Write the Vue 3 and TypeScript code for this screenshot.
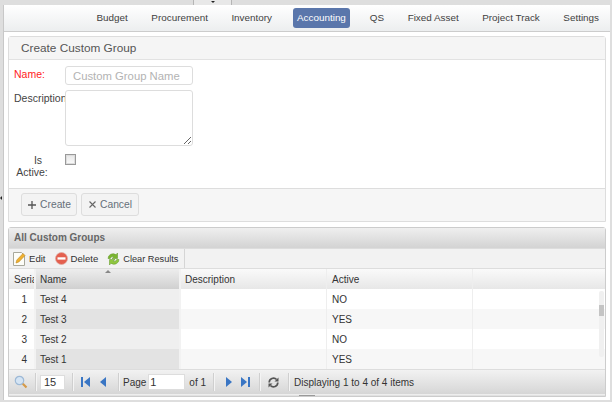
<script setup lang="ts">
const menu = ["Budget", "Procurement", "Inventory", "Accounting", "QS", "Fixed Asset", "Project Track", "Settings"];
const rows = [
  { no: 1, name: "Test 4", active: "NO" },
  { no: 2, name: "Test 3", active: "YES" },
  { no: 3, name: "Test 2", active: "NO" },
  { no: 4, name: "Test 1", active: "YES" },
];
</script>

<template>
  <div class="page">
    <div class="top-strip"><div class="top-tab"><span class="tab-arrow"></span></div></div>
    <div class="shell">
      <div class="gutter"><span class="gutter-arrow"></span></div>
      <div class="main">
        <nav class="nav">
          <a v-for="m in menu" :key="m" class="nav-item" :class="{ on: m === 'Accounting' }">{{ m }}</a>
        </nav>
        <section class="panel form-panel">
          <h2 class="panel-title">Create Custom Group</h2>
          <div class="form">
            <div class="field name-field">
              <label class="lbl req">Name:</label>
              <input class="txt" placeholder="Custom Group Name" />
            </div>
            <div class="field desc-field">
              <label class="lbl clip">Description:</label>
              <textarea class="area"></textarea>
            </div>
            <div class="field active-field">
              <label class="lbl center">Is Active:</label>
              <span class="chk"></span>
            </div>
          </div>
          <div class="actions">
            <button class="btn create">
              <svg width="10" height="10" viewBox="0 0 10 10"><path d="M5 1v8M1 5h8" stroke="#555" stroke-width="1.300" /></svg>
              Create
            </button>
            <button class="btn cancel">
              <svg width="9" height="9" viewBox="0 0 9 9"><path d="M1.500 1.500l6 6M7.500 1.500l-6 6" stroke="#666" stroke-width="1.100" /></svg>
              Cancel
            </button>
          </div>
        </section>
        <section class="panel grid-panel">
          <div class="grid-title">All Custom Groups</div>
          <div class="toolbar">
            <span class="tool t-edit">
              <svg width="13" height="15" viewBox="0 0 13 15"><path d="M.5 1.500h8l3 3v10H.5z" fill="#fdfdf8" stroke="#a8a89c" /><path d="M3 12l.8-3L10 2.500l2 2L5.800 11z" fill="#f0b030" stroke="#c08a20" stroke-width=".6" /></svg>
              Edit
            </span>
            <span class="tool t-del">
              <svg width="13" height="13" viewBox="0 0 13 13"><circle cx="6.500" cy="6.500" r="6" fill="#e4604f" stroke="#e0aaa2" stroke-width=".8" /><rect x="2.500" y="5.300" width="8" height="2.300" fill="#fff" /></svg>
              Delete
            </span>
            <span class="tool t-clear">
              <svg width="13" height="14" viewBox="0 0 13 14"><path d="M1 6.500a5 5 0 0 1 8-3.800L10.500 1v5.500H5L7 4.700A3 3 0 0 0 3.300 6.500z" fill="#7ab52f" stroke="#5c9420" stroke-width=".5" /><path d="M12 7.500a5 5 0 0 1-8 3.800L2.500 13V7.500H8L6 9.300a3 3 0 0 0 3.700-1.800z" fill="#8fc73f" stroke="#5c9420" stroke-width=".5" /></svg>
              Clear Results
            </span>
            <span class="tool-sep"></span>
          </div>
          <div class="table">
            <div class="row head">
              <div class="c serial">Serial</div>
              <div class="c name sorted">Name<span class="sort"></span></div>
              <div class="c desc">Description</div>
              <div class="c act">Active</div>
              <div class="c rest"></div>
            </div>
            <div v-for="r in rows" :key="r.no" class="row" :class="{ alt: r.no % 2 === 0 }">
              <div class="c serial num">{{ r.no }}</div>
              <div class="c name">{{ r.name }}</div>
              <div class="c desc"></div>
              <div class="c act">{{ r.active }}</div>
              <div class="c rest"></div>
            </div>
            <div class="vscroll"><span class="vthumb"></span></div>
          </div>
          <div class="pager">
            <svg class="p-find" width="14" height="14" viewBox="0 0 14 14"><circle cx="5.500" cy="5.500" r="4.200" fill="#d4e4f4" stroke="#9db9d6" stroke-width="1.200" /><path d="M8.800 8.800l3.700 3.700" stroke="#d49a4a" stroke-width="2.200" /></svg>
            <span class="sep s1"></span>
            <input class="size" value="15" />
            <span class="sep s2"></span>
            <svg class="p-first" width="9" height="10" viewBox="0 0 9 10"><rect width="2" height="10" fill="#3a76c4" /><path d="M9 0v10L3 5z" fill="#3a76c4" /></svg>
            <svg class="p-prev" width="6" height="10" viewBox="0 0 6 10"><path d="M6 0v10L0 5z" fill="#3a76c4" /></svg>
            <span class="sep s3"></span>
            <span class="p-txt p-page">Page</span>
            <input class="page-no" value="1" />
            <span class="p-txt">of 1</span>
            <span class="sep s4"></span>
            <svg class="p-next" width="6" height="10" viewBox="0 0 6 10"><path d="M0 0v10l6-5z" fill="#3a76c4" /></svg>
            <svg class="p-last" width="9" height="10" viewBox="0 0 9 10"><rect x="7" width="2" height="10" fill="#3a76c4" /><path d="M0 0v10l6-5z" fill="#3a76c4" /></svg>
            <span class="sep s5"></span>
            <svg class="p-refresh" width="11" height="11" viewBox="0 0 11 11"><path d="M1.200 5.500a4.300 4.300 0 0 1 7.400-3M9.800 5.500a4.300 4.300 0 0 1-7.400 3" fill="none" stroke="#555" stroke-width="1.700" /><path d="M10.500.500v4h-4zM.5 10.500v-4h4z" fill="#555" /></svg>
            <span class="sep s6"></span>
            <span class="p-txt">Displaying 1 to 4 of 4 items</span>
          </div>
          <div class="hscroll"><span class="handle"></span></div>
        </section>
      </div>
    </div>
  </div>
</template>

<style>
html,
body {
  margin: 0;
  background: #dedede;
}
</style>

<style scoped>
.page {
  width: 612px;
  height: 402px;
  overflow: hidden;
  font-family: "Liberation Sans", Arial, sans-serif;
  font-size: 11px;
  color: #333;
  display: flex;
  flex-direction: column;
}
.top-strip {
  height: 5px;
  background: #dedede;
  padding-left: 193px;
}
.top-tab {
  width: 39px;
  height: 5px;
  box-sizing: border-box;
  border-left: 1px solid #b5b5b5;
  border-right: 1px solid #b5b5b5;
  background: #e8e8e8;
  display: flex;
  justify-content: center;
}
.tab-arrow {
  width: 0;
  height: 0;
  margin-top: 1px;
  border: 2px solid transparent;
  border-top: 2px solid #222;
}
.shell {
  flex: 1;
  display: flex;
  min-height: 0;
  padding-right: 2px;
  padding-bottom: 2px;
}
.gutter {
  width: 4px;
  background: #dedede;
  border-right: 1px solid #c8c8c8;
  box-sizing: border-box;
  display: flex;
  align-items: flex-start;
}
.gutter-arrow {
  margin-top: 191px;
  width: 0;
  height: 0;
  border: 2px solid transparent;
  border-right: 2px solid #222;
  border-left: 0;
}
.main {
  flex: 1;
  min-width: 0;
  background: #fff;
  display: flex;
  flex-direction: column;
  padding-bottom: 3px;
}
.nav {
  height: 27px;
  box-sizing: border-box;
  border-bottom: 1px solid #ccc;
  background: linear-gradient(#fff, #eceeef);
  display: flex;
  justify-content: flex-end;
  align-items: center;
  padding-right: 11px;
  gap: 23.500px;
  font-size: 9.900px;
}
.nav-item {
  color: #3f3f3f;
  line-height: 20px;
}
.nav-item.on {
  background: #5a76ab;
  color: #fff;
  border-radius: 3px;
  padding: 0 4.500px;
  margin: 0 -4px 0 -3px;
}
.panel {
  margin: 0 4px 0 4px;
  box-sizing: border-box;
  border: 1px solid #ddd;
  border-radius: 3px 3px 0 0;
}
.form-panel {
  margin-top: 4px;
  height: 186px;
  background: #f6f6f6;
  display: flex;
  flex-direction: column;
}
.panel-title {
  margin: 0;
  height: 23px;
  box-sizing: border-box;
  border-bottom: 1px solid #e2e2e2;
  padding-left: 12px;
  font-size: 11.800px;
  font-weight: normal;
  line-height: 23px;
  color: #555;
  background: #f5f5f5;
}
.form {
  background: #fff;
  height: 129px;
  box-sizing: border-box;
  padding: 6px 0 0 5px;
  border-bottom: 1px solid #ddd;
}
.field {
  display: flex;
  align-items: flex-start;
}
.lbl {
  width: 51px;
  flex: none;
  color: #444;
  line-height: 12px;
  font-size: 10.500px;
}
.req {
  color: #f22;
  padding-top: 2px;
}
.clip {
  overflow: hidden;
  white-space: nowrap;
  padding-top: 2px;
}
.center {
  width: 36px;
  margin-right: 15px;
  text-align: center;
  text-indent: 12px;
}
.txt,
.area {
  width: 128px;
  box-sizing: border-box;
  border: 1px solid #ddd;
  border-radius: 3px;
  font-family: inherit;
  font-size: 11.300px;
  padding: 0 7px;
  margin: 0;
  background: #fff;
  outline: none;
}
.txt {
  height: 19px;
}
.txt::placeholder {
  color: #b3b3b3;
}
.area {
  height: 56px;
  display: block;
}
.desc-field {
  margin-top: 5px;
}
.active-field {
  margin-top: 8px;
}
.chk {
  display: block;
  width: 11px;
  height: 11px;
  box-sizing: border-box;
  border: 1px solid #999;
  background: linear-gradient(#e6e6e6, #fbfbfb);
  box-shadow: inset 0 0 0 1px #ddd;
}
.actions {
  flex: 1;
  display: flex;
  align-items: flex-start;
  gap: 4px;
  padding: 4px 0 0 12px;
}
.btn {
  height: 23px;
  box-sizing: border-box;
  border: 1px solid #ddd;
  border-radius: 3px;
  background: #f3f3f3;
  color: #66707a;
  font-family: inherit;
  font-size: 10.300px;
  padding: 0;
  display: flex;
  align-items: center;
  justify-content: center;
  gap: 3px;
}
.create {
  width: 56px;
}
.cancel {
  width: 58px;
}
.grid-panel {
  margin-top: 5px;
  flex: 1;
  display: flex;
  flex-direction: column;
  min-height: 0;
  border-color: #ccc;
  background: #e2e2e2;
}
.grid-title {
  height: 21px;
  line-height: 20px;
  padding-left: 5px;
  font-weight: bold;
  font-size: 10px;
  color: #666;
  background: linear-gradient(#efefef, #d3d3d3);
  border-bottom: 1px solid #ddd;
  box-sizing: border-box;
}
.toolbar {
  height: 20px;
  box-sizing: border-box;
  display: flex;
  align-items: center;
  background: #f2f2f2;
  border-bottom: 1px solid #ddd;
  padding-left: 4px;
  font-size: 9.600px;
}
.tool {
  display: flex;
  align-items: center;
  gap: 3px;
  white-space: nowrap;
}
.t-edit {
  margin-right: 9px;
}
.t-del {
  margin-right: 9px;
}
.t-clear {
  margin-right: 6px;
  font-size: 9.200px;
}
.tool-sep {
  width: 1px;
  height: 19px;
  background: #d5d5d5;
}
.table {
  position: relative;
  background: #fff;
  font-size: 10px;
}
.row {
  display: grid;
  grid-template-columns: 27px 145px 146px 146px 1fr;
  height: 20px;
  line-height: 22px;
}
.row.alt {
  background: #f7f7f7;
}
.head {
  background: linear-gradient(#fafafa, #e7e7e7);
}
.c {
  box-sizing: border-box;
  padding: 0 4px;
  overflow: hidden;
  white-space: nowrap;
  border-right: 1px solid #eee;
}
.serial {
  padding: 0 0 0 5px;
  border-right: 2px solid #f2f2f2;
}
.num {
  text-align: right;
  padding-right: 7px;
}
.row .name {
  background: #efefef;
  border-right: 2px solid #f2f2f2;
}
.row.alt .name {
  background: #e3e3e3;
}
.head .name.sorted {
  position: relative;
  background: linear-gradient(#ededed, #d0d0d0);
}
.sort {
  position: absolute;
  top: 1px;
  left: 69px;
  width: 0;
  height: 0;
  border: 3px solid transparent;
  border-bottom: 3px solid #888;
  border-top: 0;
}
.act {
  padding-left: 5px;
}
.rest {
  border-right: 0;
}
.vscroll {
  position: absolute;
  top: 22px;
  right: 1px;
  width: 5px;
  height: 66px;
  background: #f0f0f0;
  border-radius: 2px;
}
.vthumb {
  display: block;
  margin-top: 14px;
  height: 11px;
  background: #c4c4c4;
}
.pager {
  height: 25px;
  box-sizing: border-box;
  display: flex;
  align-items: center;
  padding-left: 5px;
  background: linear-gradient(#f2f2f2, #d6d6d6);
  border-top: 1px solid #ddd;
  font-size: 10px;
  flex: none;
}
.sep {
  width: 1px;
  height: 18px;
  background: #cfcfcf;
  box-shadow: 1px 0 0 #f4f4f4;
  flex: none;
}
.s1 {
  margin: 0 4px 0 7px;
}
.s2 {
  margin: 0 8px 0 7px;
}
.s3 {
  margin: 0 4px 0 12px;
}
.s4 {
  margin: 0 12px 0 7px;
}
.s5 {
  margin: 0 8px 0 9px;
}
.s6 {
  margin: 0 5px 0 9px;
}
.size {
  width: 25px;
  height: 15px;
  box-sizing: border-box;
  border: 1px solid #ddd;
  padding: 0 3px;
  font-family: inherit;
  font-size: 11px;
  color: #333;
  outline: none;
}
.p-prev {
  margin-left: 10px;
}
.p-last {
  margin-left: 9px;
}
.page-no {
  width: 37px;
  height: 16px;
  margin: 0 4px 0 2px;
  box-sizing: border-box;
  border: 1px solid #ddd;
  padding: 0 1px;
  font-family: inherit;
  font-size: 11px;
  color: #333;
  outline: none;
}
.p-txt {
  white-space: nowrap;
}
.hscroll {
  flex: 1;
  display: flex;
  justify-content: center;
  align-items: center;
  background: #e2e2e2;
  border-top: 1px solid #eee;
}
.handle {
  width: 16px;
  height: 1px;
  background: #999;
}
</style>
